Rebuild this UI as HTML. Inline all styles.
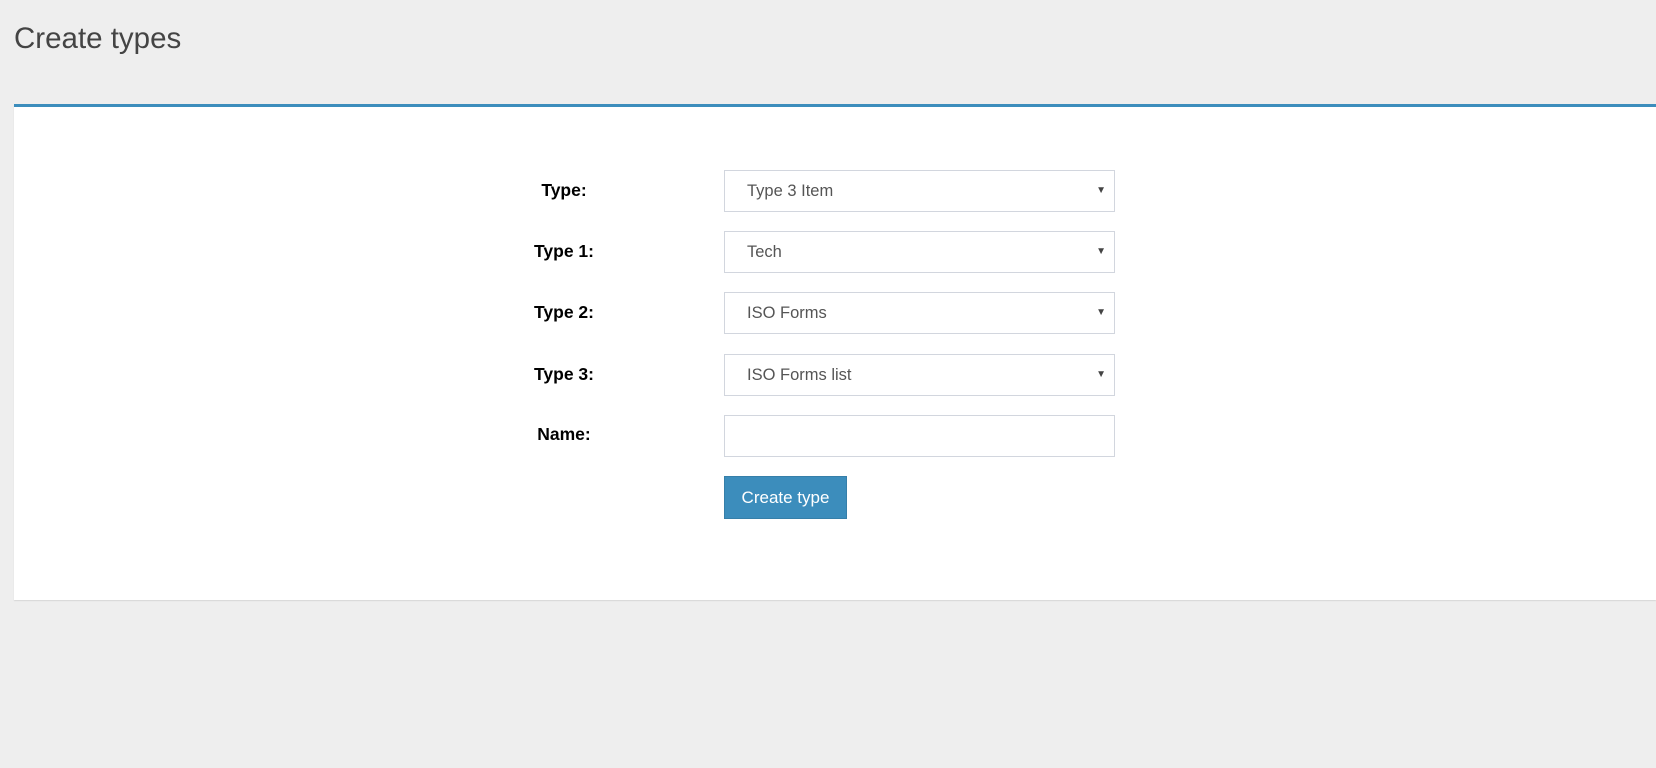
<!DOCTYPE html>
<html><head><style>
html,body{margin:0;padding:0;}
body{width:1656px;height:768px;background:#eeeeee;font-family:"Liberation Sans",Arial,sans-serif;position:relative;overflow:hidden;}
h1{position:absolute;left:14px;top:22px;margin:0;font-weight:normal;font-size:29.5px;color:#444;}
.panel{position:absolute;left:14px;top:104px;right:0;height:493px;background:#fff;border-top:3px solid #3c8dbc;box-shadow:0 1px 1px rgba(0,0,0,0.1);}
.lbl{position:absolute;width:150px;left:489px;text-align:center;font-weight:bold;font-size:17.5px;color:#000;}
.sel{position:absolute;left:724px;width:391px;height:42px;border:1px solid #d2d6de;box-sizing:border-box;background:#fff;font-size:16.5px;color:#555;line-height:40px;padding-left:22px;}
.sel .a{position:absolute;right:8px;top:0;font-size:10px;color:#444;}
.btn{position:absolute;left:724px;top:476px;width:123px;height:43px;background:#3c8dbc;border:1px solid #367fa9;box-sizing:border-box;color:#fff;font-size:17px;text-align:center;line-height:41px;}
</style></head><body>
<h1>Create types</h1>
<div class="panel"></div>
<div class="lbl" style="top:180px">Type:</div>
<div class="sel" style="top:170px">Type 3 Item<span class="a">▼</span></div>
<div class="lbl" style="top:241px">Type 1:</div>
<div class="sel" style="top:231px">Tech<span class="a">▼</span></div>
<div class="lbl" style="top:302px">Type 2:</div>
<div class="sel" style="top:292px">ISO Forms<span class="a">▼</span></div>
<div class="lbl" style="top:364px">Type 3:</div>
<div class="sel" style="top:354px">ISO Forms list<span class="a">▼</span></div>
<div class="lbl" style="top:424px">Name:</div>
<div class="sel" style="top:415px"></div>
<div class="btn">Create type</div>
</body></html>
